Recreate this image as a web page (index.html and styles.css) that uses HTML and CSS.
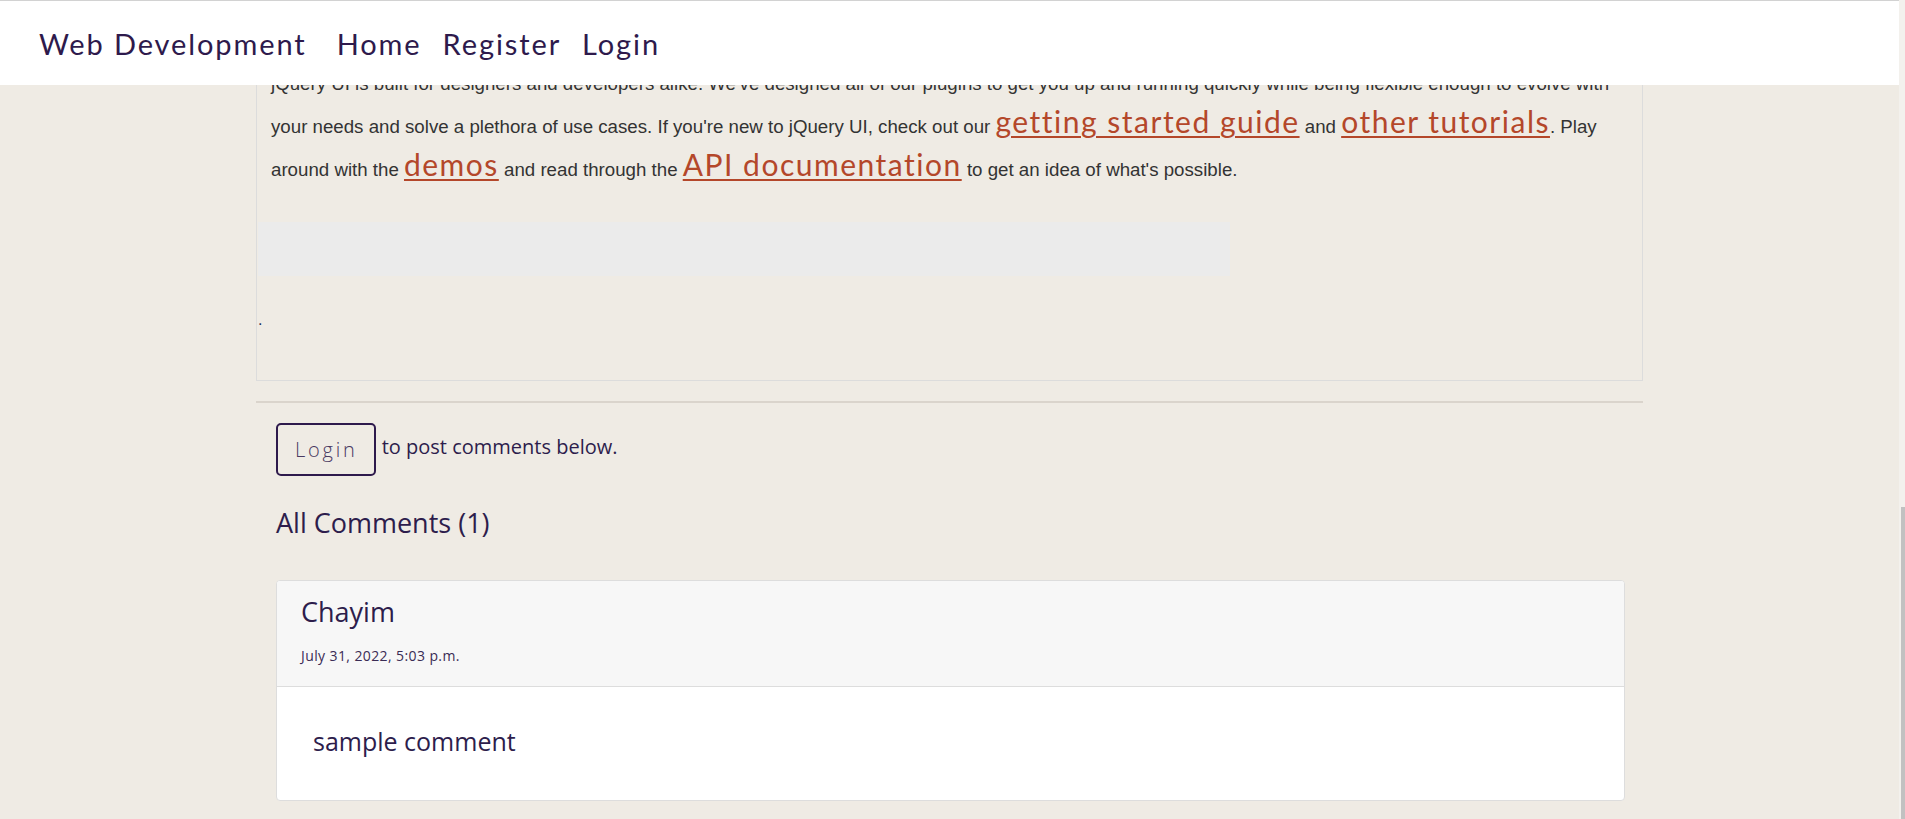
FILE: index.html
```html
<!DOCTYPE html>
<html lang="en">
<head>
<meta charset="utf-8">
<title>Web Development</title>
<link rel="stylesheet" href="styles.css">
</head>
<body>
<header class="navbar">
  <a class="brand" href="#">Web Development</a>
  <nav class="nav-links">
    <a href="#">Home</a>
    <a href="#">Register</a>
    <a href="#">Login</a>
  </nav>
</header>

<main class="container">
  <article class="post">
    <p class="intro">jQuery UI is built for designers and developers alike. We've designed all of our plugins to get you up and running quickly while being flexible enough to evolve with your needs and solve a plethora of use cases. If you're new to jQuery UI, check out our <a href="#">getting started guide</a> and <a href="#">other tutorials</a>. Play around with the <a href="#">demos</a> and read through the <a href="#">API documentation</a> to get an idea of what's possible.</p>
    <div class="placeholder"></div>
    <p class="dot">.</p>
  </article>

  <hr class="divider">

  <section class="comments">
    <div class="login-row">
      <a class="btn-login" href="#">Login</a>
      <span class="login-note">to post comments below.</span>
    </div>
    <h2 class="comments-title">All Comments (1)</h2>
    <div class="card">
      <div class="card-header">
        <h3 class="author">Chayim</h3>
        <div class="date">July 31, 2022, 5:03 p.m.</div>
      </div>
      <div class="card-body">
        <p class="comment-text">sample comment</p>
      </div>
    </div>
  </section>
</main>

<div class="scrollbar"><div class="scrollbar-thumb"></div></div>
</body>
</html>
```

FILE: styles.css
```css
html, body {
  margin: 0;
  padding: 0;
}

body {
  background: #efebe4;
  font-family: "Open Sans", "Liberation Sans", sans-serif;
  color: #2d1d4c;
  padding-top: 61px;
  padding-right: 6px;
}

a {
  color: inherit;
}

.navbar {
  position: fixed;
  top: 0;
  left: 0;
  right: 6px;
  height: 84px;
  background: #ffffff;
  border-top: 1px solid #d2d2d2;
  display: flex;
  align-items: center;
  padding-left: 39px;
  z-index: 10;
  font-family: Lato, "Open Sans", sans-serif;
  font-size: 29px;
  letter-spacing: 1.9px;
}

.navbar a {
  color: #2e1a4c;
  text-decoration: none;
}

.nav-links {
  display: flex;
  gap: 21px;
  margin-left: 30px;
}

.container {
  width: 1387px;
  margin: 0 auto;
}

.post {
  border: 1px solid #dcdcdc;
  padding: 0 1px 50px;
}

.intro {
  margin: 0;
  padding: 0 2px 0 13px;
  font-family: "Liberation Sans", Arial, sans-serif;
  font-size: 18.7px;
  line-height: 43px;
  color: #333333;
}

.intro a {
  font-family: Lato, "Open Sans", sans-serif;
  font-size: 30px;
  line-height: 1;
  letter-spacing: 1.5px;
  color: #b4472a;
  text-decoration: underline;
  text-decoration-thickness: 2px;
  text-underline-offset: 3px;
}

.placeholder {
  margin-top: 31px;
  width: 972px;
  height: 54px;
  background: #ebebeb;
}

.dot {
  margin: 34px 0 0;
  font-family: "Liberation Sans", Arial, sans-serif;
  font-size: 16px;
  line-height: 20px;
  color: #1f2f5a;
}

.divider {
  margin: 20px 0 0;
  border: 0;
  border-top: 2px solid #dad4cc;
  height: 0;
}

.comments {
  padding: 20px 18px 0 20px;
}

.login-row {
  display: flex;
  align-items: center;
  gap: 6px;
}

.btn-login {
  display: inline-block;
  border: 2px solid #2e1a4c;
  border-radius: 5px;
  padding: 12px 16px 12px 17px;
  font-family: "Open Sans", sans-serif;
  font-weight: 300;
  font-size: 20px;
  line-height: 25px;
  letter-spacing: 2.8px;
  color: #4a3a62;
  text-decoration: none;
}

.login-note {
  font-size: 20px;
  color: #2d1d4c;
  margin-top: -6px;
}

.comments-title {
  margin: 31px 0 0;
  font-size: 27px;
  font-weight: 400;
  line-height: 32px;
  color: #2d1d4c;
}

.card {
  margin-top: 41px;
  background: #ffffff;
  border: 1px solid #dddddd;
  border-radius: 4px;
  overflow: hidden;
}

.card-header {
  background: #f7f7f7;
  border-bottom: 1px solid #dddddd;
  padding: 15px 24px 20px;
}

.author {
  margin: 0;
  font-size: 27px;
  font-weight: 400;
  line-height: 32px;
  color: #2d1d4c;
}

.date {
  margin-top: 17px;
  font-size: 14px;
  line-height: 21px;
  letter-spacing: 0.4px;
  color: #3a2c55;
}

.card-body {
  padding: 36px 36px 40px;
}

.comment-text {
  margin: 0;
  font-size: 25px;
  line-height: 37px;
  color: #2d1d4c;
}

.scrollbar {
  position: fixed;
  top: 0;
  right: 0;
  width: 6px;
  height: 100%;
  background: #f3f1ed;
}

.scrollbar-thumb {
  margin-top: 507px;
  margin-left: 2px;
  width: 4px;
  height: 312px;
  background: #c1c1c1;
}
```
